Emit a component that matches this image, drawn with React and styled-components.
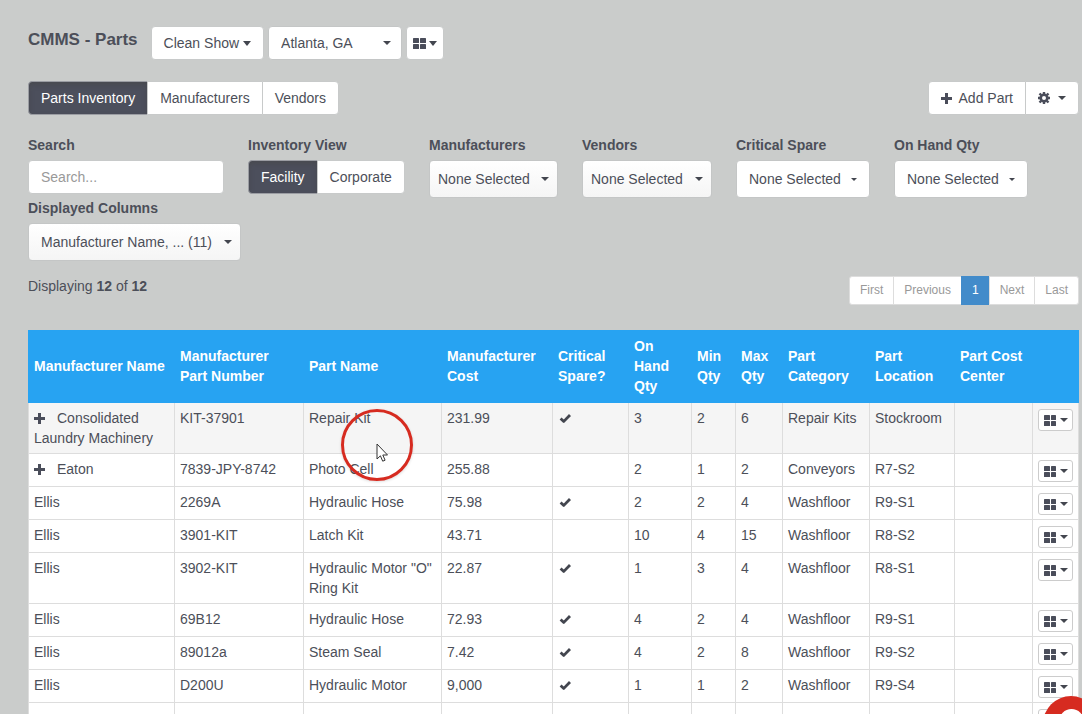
import React, { useState } from "react";
import styled, { createGlobalStyle } from "styled-components";

const GlobalStyle = createGlobalStyle`
  * {
    box-sizing: border-box;
  }

  body {
    margin: 0;
    background-color: #cacccb;
    color: #4c4f59;
    font-family: "Liberation Sans", Arial, sans-serif;
    font-size: 14px;
    line-height: 20px;
    overflow: hidden;
  }

  button, input, select {
    font: inherit;
    color: inherit;
    margin: 0;
  }
`;

const Page = styled.main`
  padding: 26px 3px 0 28px;
`;

const Header = styled.header`
  display: flex;
  align-items: center;
  gap: 4px;
  height: 34px;
  margin-bottom: 21px;

  h1 {
    margin: 0 9px 6px 0;
    font-size: 17px;
    line-height: 20px;
    white-space: nowrap;
  }
`;

const Toolbar = styled.div`
  display: flex;
  justify-content: space-between;
  margin-bottom: 20px;
`;

const ButtonGroup = styled.div`
  display: flex;

  button {
    border-radius: 0;
  }
  button + button {
    margin-left: -1px;
  }
  button:first-child {
    border-radius: 4px 0 0 4px;
  }
  button:last-child {
    border-radius: 0 4px 4px 0;
  }
`;

const Button = styled.button`
  display: flex;
  align-items: center;
  gap: ${(props) => props.$gap || 4}px;
  height: 34px;
  padding: 0 ${(props) => props.$pad || 12}px;
  white-space: nowrap;
  border: 1px solid ${(props) => (props.$active ? "#9b9da3" : "#c8caca")};
  border-radius: 4px;
  background-color: ${(props) => (props.$active ? "#4c4f5c" : "#fff")};
  color: ${(props) => (props.$active ? "#fff" : "inherit")};
  box-shadow: ${(props) =>
    props.$active ? "inset 0 3px 5px rgba(70, 70, 70, 0.5)" : "none"};
  cursor: pointer;
`;

const Filters = styled.div`
  display: flex;
  flex-wrap: wrap;
  gap: 0 24px;
`;

const Field = styled.div`
  display: flex;
  flex-direction: column;
  width: ${(props) => props.$width}px;
  min-height: 63px;

  > label, > span {
    margin-bottom: 5px;
    font-weight: 700;
    white-space: nowrap;
  }
`;

const SearchInput = styled.input`
  width: 100%;
  height: 34px;
  padding: 0 12px;
  border: 1px solid #c8caca;
  border-radius: 4px;
  background-color: #fff;

  &::placeholder {
    color: #999;
    opacity: 1;
  }
`;

const SelectBox = styled.div`
  display: grid;
  align-items: center;
  width: ${(props) => (props.$width ? `${props.$width}px` : "100%")};

  select, svg {
    grid-area: 1 / 1;
  }
  select {
    appearance: none;
    width: 100%;
    height: ${(props) => props.$height || 38}px;
    padding: 0 ${(props) => props.$pad || 12}px;
    border: 1px solid #c4c6c6;
    border-radius: 4px;
    background: ${(props) =>
      props.$shaded ? "linear-gradient(#fff, #f5f5f5)" : "#fff"};
  }
  svg {
    justify-self: end;
    margin-right: ${(props) => props.$caretRight || 9}px;
    pointer-events: none;
  }
`;

const Summary = styled.div`
  display: flex;
  justify-content: space-between;
  align-items: flex-start;
  margin: 15px 0 25px;

  p {
    margin: 0;
  }
`;

const Pagination = styled.nav`
  display: flex;
  font-size: 12px;
`;

const PageLink = styled.a`
  height: 29px;
  padding: 3px 10px;
  border: 1px solid ${(props) => (props.$active ? "#428bca" : "#ddd")};
  background-color: ${(props) => (props.$active ? "#428bca" : "#fff")};
  color: ${(props) => (props.$active ? "#fff" : "#999")};
  text-decoration: none;

  & + & {
    margin-left: -1px;
  }
  &:first-child {
    border-radius: 3px 0 0 3px;
  }
  &:last-child {
    border-radius: 0 3px 3px 0;
  }
`;

const Table = styled.table`
  width: 100%;
  table-layout: fixed;
  border-collapse: separate;
  border-spacing: 0;
  background-color: #fff;

  th {
    height: 73px;
    padding: 5px 5px 7px 6px;
    color: #fff;
    background-color: #27a3f2;
    text-align: left;
    vertical-align: middle;
  }
  td {
    padding: 5px 5px 5px;
    border: 1px solid #ddd;
    border-width: 0 0 1px 1px;
    vertical-align: top;
  }
  td:last-child {
    padding-bottom: 4px;
    border-right-width: 1px;
  }
  tbody tr:first-child td {
    background-color: #f5f5f5;
  }
  td > svg {
    display: block;
    margin: 5px 0 0 1px;
  }
`;

const ExpandButton = styled.button`
  padding: 0;
  margin-right: 12px;
  border: none;
  background: none;
  line-height: 0;
  vertical-align: -1px;
  cursor: pointer;
`;

const RowButton = styled.button`
  display: flex;
  align-items: center;
  justify-content: center;
  gap: 4px;
  width: 35px;
  height: 22px;
  margin-top: 1px;
  padding: 0;
  border: 1px solid #ccc;
  border-radius: 3px;
  background-color: #fff;
  cursor: pointer;
`;

const ClickRing = styled.div`
  position: fixed;
  left: 341px;
  top: 409px;
  width: 72px;
  height: 72px;
  border: 3px solid #d62b20;
  border-radius: 50%;
  box-shadow: 0 1px 3px rgba(0, 0, 0, 0.15);
  pointer-events: none;
`;

const Pointer = styled.svg`
  position: fixed;
  left: 376px;
  top: 443px;
  pointer-events: none;
`;

const ChatButton = styled.button`
  position: fixed;
  right: -17px;
  bottom: -38px;
  display: flex;
  justify-content: center;
  width: 56px;
  height: 56px;
  padding: 13px 0 0;
  border: none;
  border-radius: 50%;
  background-color: #d62b20;
`;

const Caret = ({ width = 8, height = 4 }) => (
  <svg
    width={width}
    height={height}
    viewBox="0 0 8 4"
    preserveAspectRatio="none"
    aria-hidden="true"
  >
    <path d="M0 0h8L4 4z" fill="#43464f" />
  </svg>
);

const GridIcon = ({ width = 13 }) => (
  <svg width={width} height="11" viewBox={`0 0 ${width} 11`} aria-hidden="true">
    <g fill="#4a4d5a">
      <rect width="6" height="5" rx="0.6" />
      <rect x="7" width={width - 7} height="5" rx="0.6" />
      <rect y="6" width="6" height="5" rx="0.6" />
      <rect x="7" y="6" width={width - 7} height="5" rx="0.6" />
    </g>
  </svg>
);

const PlusIcon = () => (
  <svg width="11" height="11" viewBox="0 0 11 11" aria-hidden="true">
    <path d="M4 0h3v4h4v3H7v4H4V7H0V4h4z" fill="#4a4d5a" />
  </svg>
);

const CheckIcon = () => (
  <svg width="13" height="11" viewBox="0 0 13 11" role="img" aria-label="Yes">
    <path
      d="M1.6 5.4L4.8 8.4 11 2"
      fill="none"
      stroke="#43464f"
      strokeWidth="2.8"
      strokeLinejoin="round"
    />
  </svg>
);

const GearIcon = () => (
  <svg width="12" height="12" viewBox="0 0 12 12" aria-hidden="true">
    <circle cx="6" cy="6" r="3.3" fill="none" stroke="#4a4d5a" strokeWidth="2.6" />
    <path
      d="M6 0v2M6 10v2M0 6h2M10 6h2M1.5 1.5l1.7 1.7M8.8 8.8l1.7 1.7M10.5 1.5L8.8 3.2M3.2 8.8l-1.7 1.7"
      stroke="#4a4d5a"
      strokeWidth="2.4"
    />
  </svg>
);

const Select = ({ id, label, caret, children, ...rest }) => (
  <SelectBox {...rest}>
    <select id={id} aria-label={label}>
      <option>{children}</option>
    </select>
    <Caret width={caret} height={caret ? caret / 2 : 4} />
  </SelectBox>
);

const tabs = ["Parts Inventory", "Manufacturers", "Vendors"];
const views = ["Facility", "Corporate"];
const pages = ["First", "Previous", "1", "Next", "Last"];

const columns = [
  { name: "Manufacturer Name", width: 146 },
  { name: "Manufacturer Part Number", width: 129 },
  { name: "Part Name", width: 138 },
  { name: "Manufacturer Cost", width: 111 },
  { name: "Critical Spare?", width: 76 },
  { name: "On Hand Qty", width: 63 },
  { name: "Min Qty", width: 44 },
  { name: "Max Qty", width: 47 },
  { name: "Part Category", width: 87 },
  { name: "Part Location", width: 85 },
  { name: "Part Cost Center", width: 78 },
  { name: "", width: 47 },
];

const parts = [
  { maker: "Consolidated Laundry Machinery", group: true, number: "KIT-37901", name: "Repair Kit", cost: "231.99", critical: true, onHand: 3, min: 2, max: 6, category: "Repair Kits", location: "Stockroom" },
  { maker: "Eaton", group: true, number: "7839-JPY-8742", name: "Photo Cell", cost: "255.88", critical: false, onHand: 2, min: 1, max: 2, category: "Conveyors", location: "R7-S2" },
  { maker: "Ellis", number: "2269A", name: "Hydraulic Hose", cost: "75.98", critical: true, onHand: 2, min: 2, max: 4, category: "Washfloor", location: "R9-S1" },
  { maker: "Ellis", number: "3901-KIT", name: "Latch Kit", cost: "43.71", critical: false, onHand: 10, min: 4, max: 15, category: "Washfloor", location: "R8-S2" },
  { maker: "Ellis", number: "3902-KIT", name: 'Hydraulic Motor "O" Ring Kit', cost: "22.87", critical: true, onHand: 1, min: 3, max: 4, category: "Washfloor", location: "R8-S1" },
  { maker: "Ellis", number: "69B12", name: "Hydraulic Hose", cost: "72.93", critical: true, onHand: 4, min: 2, max: 4, category: "Washfloor", location: "R9-S1" },
  { maker: "Ellis", number: "89012a", name: "Steam Seal", cost: "7.42", critical: true, onHand: 4, min: 2, max: 8, category: "Washfloor", location: "R9-S2" },
  { maker: "Ellis", number: "D200U", name: "Hydraulic Motor", cost: "9,000", critical: true, onHand: 1, min: 1, max: 2, category: "Washfloor", location: "R9-S4" },
  { maker: "", number: "", name: "", cost: "", critical: false, onHand: "", min: "", max: "", category: "", location: "" },
];

const App = () => {
  const [tab, setTab] = useState("Parts Inventory");
  const [view, setView] = useState("Facility");

  return (
    <>
      <GlobalStyle />
      <Page>
        <Header>
          <h1>CMMS - Parts</h1>
          <Button>
            Clean Show <Caret height={5} />
          </Button>
          <Select label="Facility" $width={134} $height={34} $caretRight={11}>
            Atlanta, GA
          </Select>
          <Button $pad={6} $gap={3} aria-label="Layout">
            <GridIcon /> <Caret height={5} />
          </Button>
        </Header>

        <Toolbar>
          <ButtonGroup>
            {tabs.map((name) => (
              <Button key={name} $active={tab === name} onClick={() => setTab(name)}>
                {name}
              </Button>
            ))}
          </ButtonGroup>
          <ButtonGroup>
            <Button $gap={7}>
              <PlusIcon /> Add Part
            </Button>
            <Button $gap={8} aria-label="Settings">
              <GearIcon /> <Caret />
            </Button>
          </ButtonGroup>
        </Toolbar>

        <Filters>
          <Field $width={196}>
            <label htmlFor="search">Search</label>
            <SearchInput id="search" type="text" placeholder="Search..." />
          </Field>
          <Field $width={157}>
            <span>Inventory View</span>
            <ButtonGroup>
              {views.map((name) => (
                <Button key={name} $active={view === name} onClick={() => setView(name)}>
                  {name}
                </Button>
              ))}
            </ButtonGroup>
          </Field>
          <Field $width={129}>
            <label htmlFor="manufacturers">Manufacturers</label>
            <Select id="manufacturers" $pad={8} $shaded>None Selected</Select>
          </Field>
          <Field $width={130}>
            <label htmlFor="vendors">Vendors</label>
            <Select id="vendors" $pad={8} $shaded>None Selected</Select>
          </Field>
          <Field $width={134}>
            <label htmlFor="critical">Critical Spare</label>
            <Select id="critical" caret={6} $caretRight={13}>None Selected</Select>
          </Field>
          <Field $width={134}>
            <label htmlFor="onhand">On Hand Qty</label>
            <Select id="onhand" caret={6} $caretRight={13}>None Selected</Select>
          </Field>
          <Field $width={213}>
            <label htmlFor="displayed">Displayed Columns</label>
            <Select id="displayed" $shaded>Manufacturer Name, ... (11)</Select>
          </Field>
        </Filters>

        <Summary>
          <p>
            Displaying <b>12</b> of <b>12</b>
          </p>
          <Pagination aria-label="Pages">
            {pages.map((name) => (
              <PageLink key={name} href="#" $active={name === "1"}>
                {name}
              </PageLink>
            ))}
          </Pagination>
        </Summary>

        <Table>
          <colgroup>
            {columns.map(({ name, width }) => (
              <col key={name} style={{ width }} />
            ))}
          </colgroup>
          <thead>
            <tr>
              {columns.map(({ name }) => (
                <th key={name}>{name}</th>
              ))}
            </tr>
          </thead>
          <tbody>
            {parts.map((part, i) => (
              <tr key={i}>
                <td>
                  {part.group && (
                    <ExpandButton aria-label="Expand">
                      <PlusIcon />
                    </ExpandButton>
                  )}
                  {part.maker}
                </td>
                <td>{part.number}</td>
                <td>{part.name}</td>
                <td>{part.cost}</td>
                <td>{part.critical && <CheckIcon />}</td>
                <td>{part.onHand}</td>
                <td>{part.min}</td>
                <td>{part.max}</td>
                <td>{part.category}</td>
                <td>{part.location}</td>
                <td></td>
                <td>
                  <RowButton aria-label="Row actions">
                    <GridIcon width={12} /> <Caret />
                  </RowButton>
                </td>
              </tr>
            ))}
          </tbody>
        </Table>
      </Page>

      <ClickRing />
      <Pointer width="13" height="20" viewBox="0 0 13 20">
        <path
          d="M1 1v15l3.4-3.2 2.3 5.4 2.4-1-2.3-5.2H11.5z"
          fill="#fff"
          stroke="#333"
        />
      </Pointer>
      <ChatButton aria-label="Chat">
        <svg width="25" height="25" viewBox="0 0 25 25">
          <circle cx="12.5" cy="12.5" r="12.5" fill="#fff" />
        </svg>
      </ChatButton>
    </>
  );
};

export default App;
